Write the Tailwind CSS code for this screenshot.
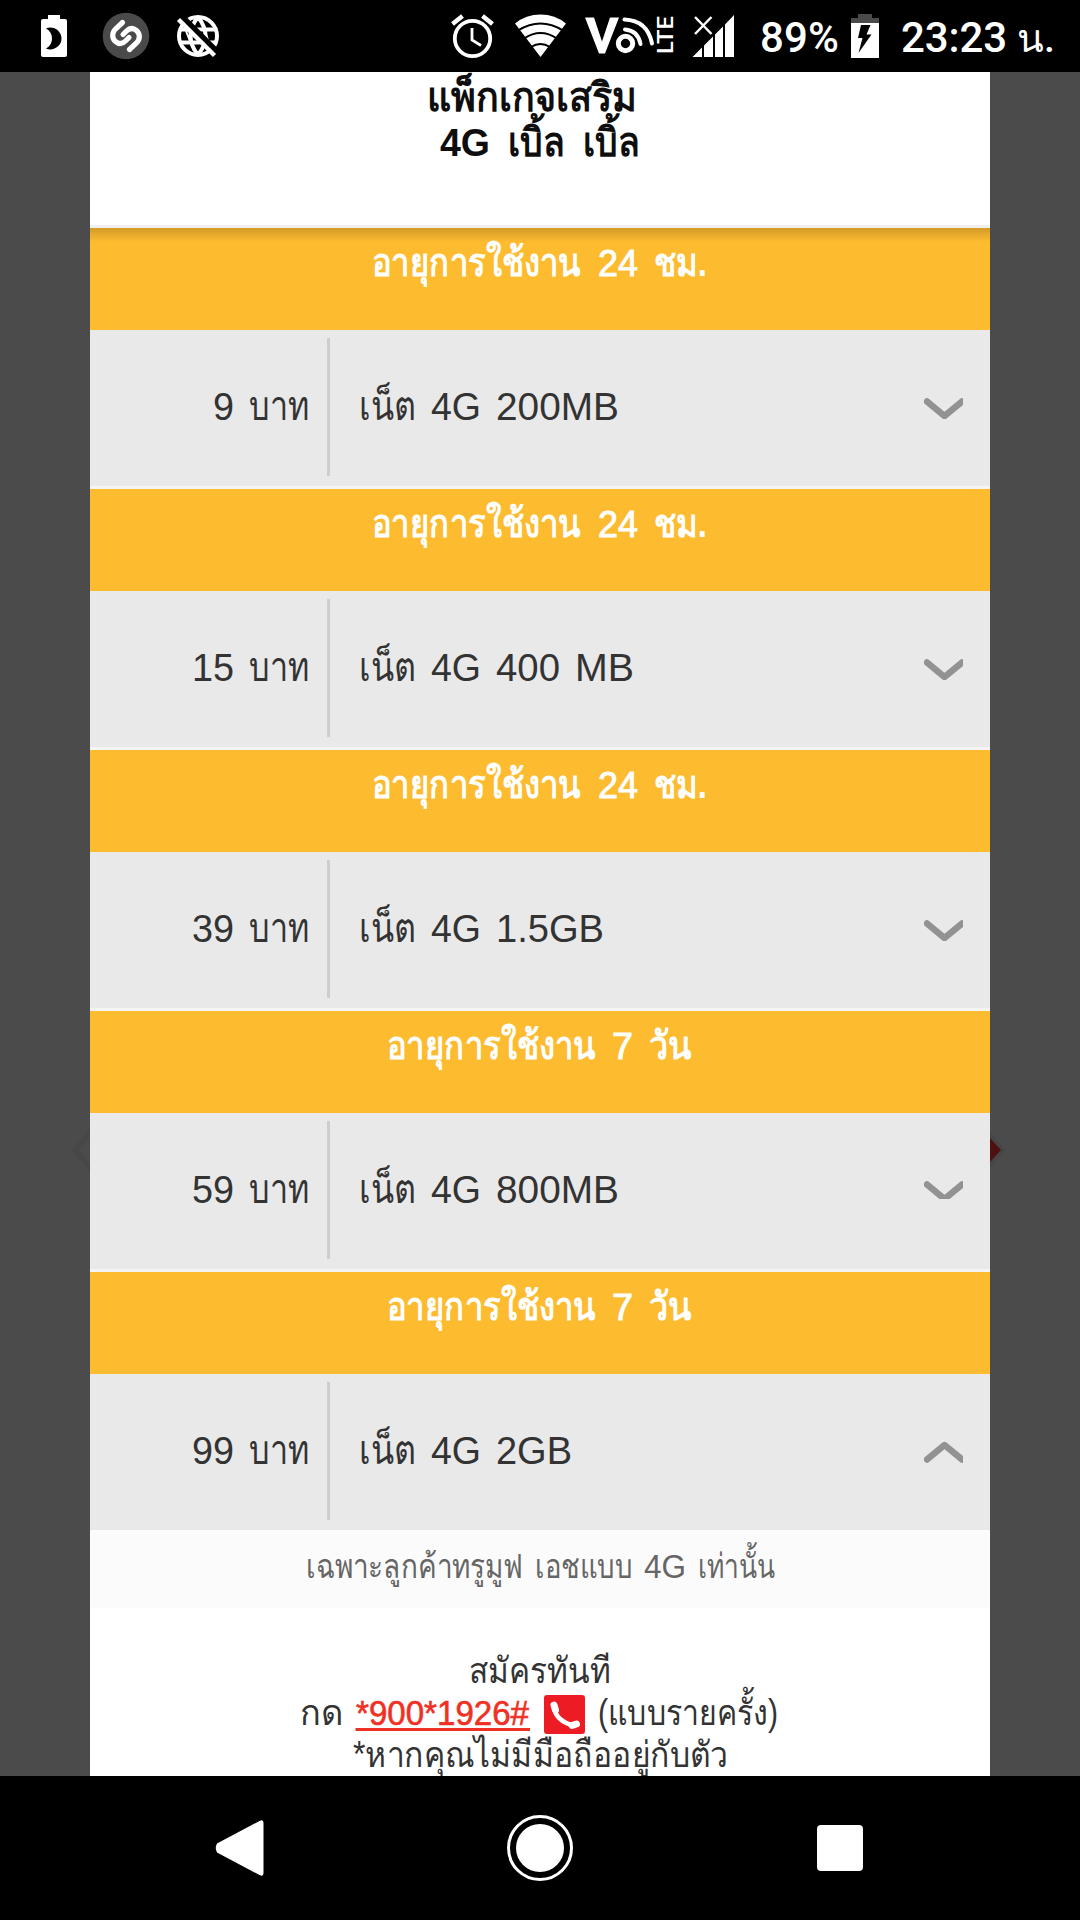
<!DOCTYPE html>
<html lang="th">

<head>
  <meta charset="UTF-8">
  <meta name="viewport" content="width=device-width, initial-scale=1.0">
  <script src="https://cdn.jsdelivr.net/npm/@tailwindcss/browser@4"></script>
  <title>แพ็กเกจเสริม 4G เบิ้ล เบิ้ล</title>
</head>

<body class="bg-black font-['Liberation_Sans',sans-serif]">
  <div class="w-[1080px] h-[1920px] flex flex-col overflow-hidden">

    <!-- Status bar -->
    <header class="h-[72px] shrink-0 bg-black text-white">
      <svg class="block" width="1080" height="72" viewBox="0 0 1080 72" fill="#fff">
        <!-- battery with moon -->
        <path d="M48 15h12v4h5q2 0 2 2v34q0 2-2 2H43q-2 0-2-2V21q0-2 2-2h5z" />
        <path d="M46 28.500c7-3 15.500 2 15.500 10s-8.500 13-15.500 10c8-4 8-16 0-20z" fill="#000" />
        <!-- music app -->
        <circle cx="126" cy="36" r="23.300" fill="#4a4a4a" />
        <path d="M122.500 22.500l-7 6.500c-4 4-3.500 9.500 0 12.500s7 2.500 10-.5l3.500-3.500M129.500 49.500l7-6.500c4-4 3.500-9.500 0-12.500s-7-2.500-10 .5l-3.500 3.500" fill="none" stroke="#fff" stroke-width="5.200" stroke-linecap="round" />
        <!-- globe, crossed out -->
        <g fill="none" stroke="#fff" stroke-width="4">
          <circle cx="198" cy="36" r="19" />
          <path d="M198 17q-15 19 0 38M198 17q15 19 0 38" />
          <path d="M180 29.500h36M180 42.500h36" />
          <path d="M186 31l8 20M201 20l7 20" stroke-width="2" />
          <path d="M182 16.500l36 36" stroke="#000" stroke-width="5.500" />
          <path d="M178.500 19.500l36 36" stroke-width="4.500" />
        </g>
        <!-- alarm -->
        <g fill="none" stroke="#fff">
          <circle cx="472.500" cy="38.500" r="17.700" stroke-width="3.800" />
          <path d="M472 28v12l9 5.500" stroke-width="2.800" />
          <path d="M452.500 24l10-8M482.500 16l10 8" stroke-width="4.500" />
        </g>
        <!-- wifi -->
        <path d="M540.500 57L515 23.500Q526 14.500 540.500 14.500T566 23.500z" />
        <path d="M518 30.500q22.500-14 45 0M524 38.500q16.500-11 33 0M531 47q9.500-6 19 0" fill="none" stroke="#000" stroke-width="2" />
        <!-- VoLTE -->
        <path d="M585 17.500h9l8 24 8-24h9l-14 36h-6z" />
        <circle cx="625.500" cy="43.500" r="7.200" fill="none" stroke="#fff" stroke-width="5" />
        <path d="M625 29.500q13 1 15.500 14.500M624.500 19.500q23 1 27.500 24" fill="none" stroke="#fff" stroke-width="4" stroke-linecap="round" />
        <text transform="translate(672.500 54) rotate(-90)" font-family="Roboto, sans-serif" font-weight="500" font-size="22.500" textLength="38" lengthAdjust="spacingAndGlyphs">LTE</text>
        <!-- signal -->
        <path d="M692.500 57L702 47.500V57zM704 45.500l9-9V57h-9zM715 34.500l8-8V57h-8zM725 24.500l9-9.500V57h-9z" />
        <path d="M695 17l16.500 17M711.500 17L695 34" fill="none" stroke="#fff" stroke-width="2.500" />
        <!-- battery -->
        <path d="M858 14h14v4h7v5h-28v-5h7z" fill="#4a4a4a" />
        <path d="M851 23h28v35h-28z" />
        <path d="M861 25h9.500l-4 9.500h5l-13 18.500 4-15h-4.500z" fill="#000" />
        <g font-family="Roboto, sans-serif" font-size="42" font-weight="500">
          <text x="760" y="52" textLength="79">89%</text>
          <text x="901" y="52" textLength="106">23:23</text>
          <text x="1017" y="52" font-size="39" font-weight="500" textLength="38" lengthAdjust="spacingAndGlyphs">น.</text>
        </g>
      </svg>
    </header>

    <!-- Dimmed page with the package sheet -->
    <main class="relative h-[1704px] shrink-0 bg-[#4b4b4b] px-[90px] overflow-hidden">
      <!-- carousel arrows behind the sheet -->
      <svg class="absolute left-[70px] top-[1050px]" width="20" height="56" viewBox="0 0 20 56" fill="none">
        <path d="M22 8L5 28l17 20" stroke="#474747" stroke-width="5" />
      </svg>
      <svg class="absolute left-[990px] top-[1050px]" width="30" height="56" viewBox="0 0 30 56">
        <path d="M0 10l15 18L0 46z" fill="#464646" />
        <path d="M0 16l11 12L0 40z" fill="#4e1111" />
      </svg>

      <div class="relative h-full bg-white flex flex-col">
        <div class="h-[156px] shrink-0 border-b-3 border-[#efefef]">
          <svg class="block" width="900" height="120" viewBox="90 72 900 120" fill="#0e0e0e" font-size="40" font-weight="700">
            <text x="427" y="111" textLength="209" lengthAdjust="spacingAndGlyphs">แพ็กเกจเสริม</text>
            <text x="440" y="156" font-size="38" textLength="50" lengthAdjust="spacingAndGlyphs">4G</text>
            <text x="508" y="156" textLength="57" lengthAdjust="spacingAndGlyphs">เบิ้ล</text>
            <text x="583" y="156" textLength="57" lengthAdjust="spacingAndGlyphs">เบิ้ล</text>
          </svg>
        </div>
        <div id="packages" class="relative shrink-0">
          <div class="absolute inset-x-0 top-0 z-10 h-[14px] bg-linear-to-b from-black/17 to-transparent"></div>
        </div>

        <div class="h-[78px] shrink-0 bg-[#fbfbfb]">
          <svg class="block" width="900" height="78" viewBox="90 1530 900 78" fill="#666" font-size="34">
            <text x="306" y="1578" textLength="217" lengthAdjust="spacingAndGlyphs">เฉพาะลูกค้าทรูมูฟ</text>
            <text x="535" y="1578" textLength="98" lengthAdjust="spacingAndGlyphs">เอชแบบ</text>
            <text x="644" y="1578" font-size="33" textLength="42" lengthAdjust="spacingAndGlyphs">4G</text>
            <text x="698" y="1578" textLength="77" lengthAdjust="spacingAndGlyphs">เท่านั้น</text>
          </svg>
        </div>
        <div class="h-[168px] shrink-0">
          <svg class="block" width="900" height="168" viewBox="90 1608 900 168" fill="#333" font-size="36">
            <text x="469" y="1683" textLength="142" lengthAdjust="spacingAndGlyphs">สมัครทันที</text>
            <text x="300" y="1725" textLength="43" lengthAdjust="spacingAndGlyphs">กด</text>
            <text x="356" y="1725" font-size="35" fill="#ee3124" stroke="#ee3124" stroke-width=".6" textLength="173" lengthAdjust="spacingAndGlyphs">*900*1926#</text>
            <path d="M355.500 1728H530v3H355.500z" fill="#ee3124" />
            <rect x="544" y="1695" width="41" height="39" rx="3" fill="#ed1c24" />
            <path d="M553.500 1705q1.500 17 22.500 21" fill="none" stroke="#fff" stroke-width="4.500" />
            <path d="M554 1705l1.500 5M572 1725.500l4.500-1.500" fill="none" stroke="#fff" stroke-width="7" stroke-linecap="round" />
            <text x="598" y="1725" textLength="180" lengthAdjust="spacingAndGlyphs">(แบบรายครั้ง)</text>
            <text x="353" y="1767" textLength="375" lengthAdjust="spacingAndGlyphs">*หากคุณไม่มีมือถืออยู่กับตัว</text>
          </svg>
        </div>
      </div>
    </main>

    <!-- Navigation bar -->
    <nav class="h-[144px] shrink-0 bg-black">
      <svg class="block" width="1080" height="144" viewBox="0 0 1080 144" fill="#fff">
        <path d="M217 67.500L259.500 45q4-2 4 2v50q0 4-4 2L217 76.500q-2.500-4.500 0-9z" />
        <circle cx="540" cy="72" r="31.500" fill="none" stroke="#fff" stroke-width="3" />
        <circle cx="540" cy="72" r="24" />
        <rect x="817" y="49" width="46" height="46" rx="4" />
      </svg>
    </nav>
  </div>

  <script>
    // every word is [text, x, width]
    const packages = [
      { label: [['อายุการใช้งาน', 372, 209], ['24', 598, 40], ['ชม.', 654, 53]], price: [['9', 213, 21], ['บาท', 249, 60]], name: [['เน็ต', 359, 57], ['4G', 431, 50], ['200MB', 496, 123]], icon: 'down' },
      { label: [['อายุการใช้งาน', 372, 209], ['24', 598, 40], ['ชม.', 654, 53]], price: [['15', 192, 42], ['บาท', 249, 60]], name: [['เน็ต', 359, 57], ['4G', 431, 50], ['400', 496, 64], ['MB', 575, 59]], icon: 'down' },
      { label: [['อายุการใช้งาน', 372, 209], ['24', 598, 40], ['ชม.', 654, 53]], price: [['39', 192, 42], ['บาท', 249, 60]], name: [['เน็ต', 359, 57], ['4G', 431, 50], ['1.5GB', 496, 108]], icon: 'down' },
      { label: [['อายุการใช้งาน', 387, 209], ['7', 612, 21], ['วัน', 649, 43]], price: [['59', 192, 42], ['บาท', 249, 60]], name: [['เน็ต', 359, 57], ['4G', 431, 50], ['800MB', 496, 123]], icon: 'cut' },
      { label: [['อายุการใช้งาน', 387, 209], ['7', 612, 21], ['วัน', 649, 43]], price: [['99', 192, 42], ['บาท', 249, 60]], name: [['เน็ต', 359, 57], ['4G', 431, 50], ['2GB', 496, 76]], icon: 'up' },
    ];

    const arrows = {
      down: 'M3 4.500L20.500 19 38 4.500',
      cut: 'M3 4.500L20.500 19 38 4.500',
      up: 'M3 18.500L20.500 4 38 18.500',
    };

    // Thai glyphs are small for their font size, so they get a larger one than the digits
    function words(list, y, thai, latin, attrs = '') {
      return list.map(([text, x, width]) => {
        const isThai = /[\u0e00-\u0e7f]/.test(text);
        return `<text x="${x - 90}" y="${y}" font-size="${isThai ? thai : latin}" ${isThai ? '' : attrs} textLength="${width}" lengthAdjust="spacingAndGlyphs">${text}</text>`;
      }).join('');
    }

    packages.forEach((item, i) => {
      const last = i === packages.length - 1;
      document.getElementById('packages').insertAdjacentHTML('beforeend', `
        <section class="bg-[#f4f4f4] ${last ? '' : 'pb-[3px]'}">
          <div class="h-[102px] bg-[#fdbb30]">
            <svg class="block" width="900" height="102" fill="#fff">${words(item.label, 48, 39, 37, 'font-weight="400" stroke="#fff" stroke-width=".9"').replaceAll('font-size="39"', 'font-size="39" font-weight="700"')}</svg>
          </div>
          <div class="h-[156px] flex items-start bg-[#e9e9e9]">
            <div class="w-[240px] h-[138px] mt-2 border-r-3 border-[#cdcdcd]">
              <svg class="block" width="237" height="138" fill="#333">${words(item.price, 82, 41, 38.5)}</svg>
            </div>
            <svg class="block mt-2" width="594" height="138" viewBox="240 0 594 138" fill="#333">${words(item.name, 82, 41, 38.5)}</svg>
            <svg class="block mt-[67px] ${item.icon === 'cut' ? 'h-[19px]' : 'h-[22px]'}" width="39" fill="none" stroke="#929292" stroke-width="6.500" stroke-linecap="round" stroke-linejoin="round"><path d="${arrows[item.icon]}" /></svg>
          </div>
        </section>
      `);
    });
  </script>
</body>

</html>
